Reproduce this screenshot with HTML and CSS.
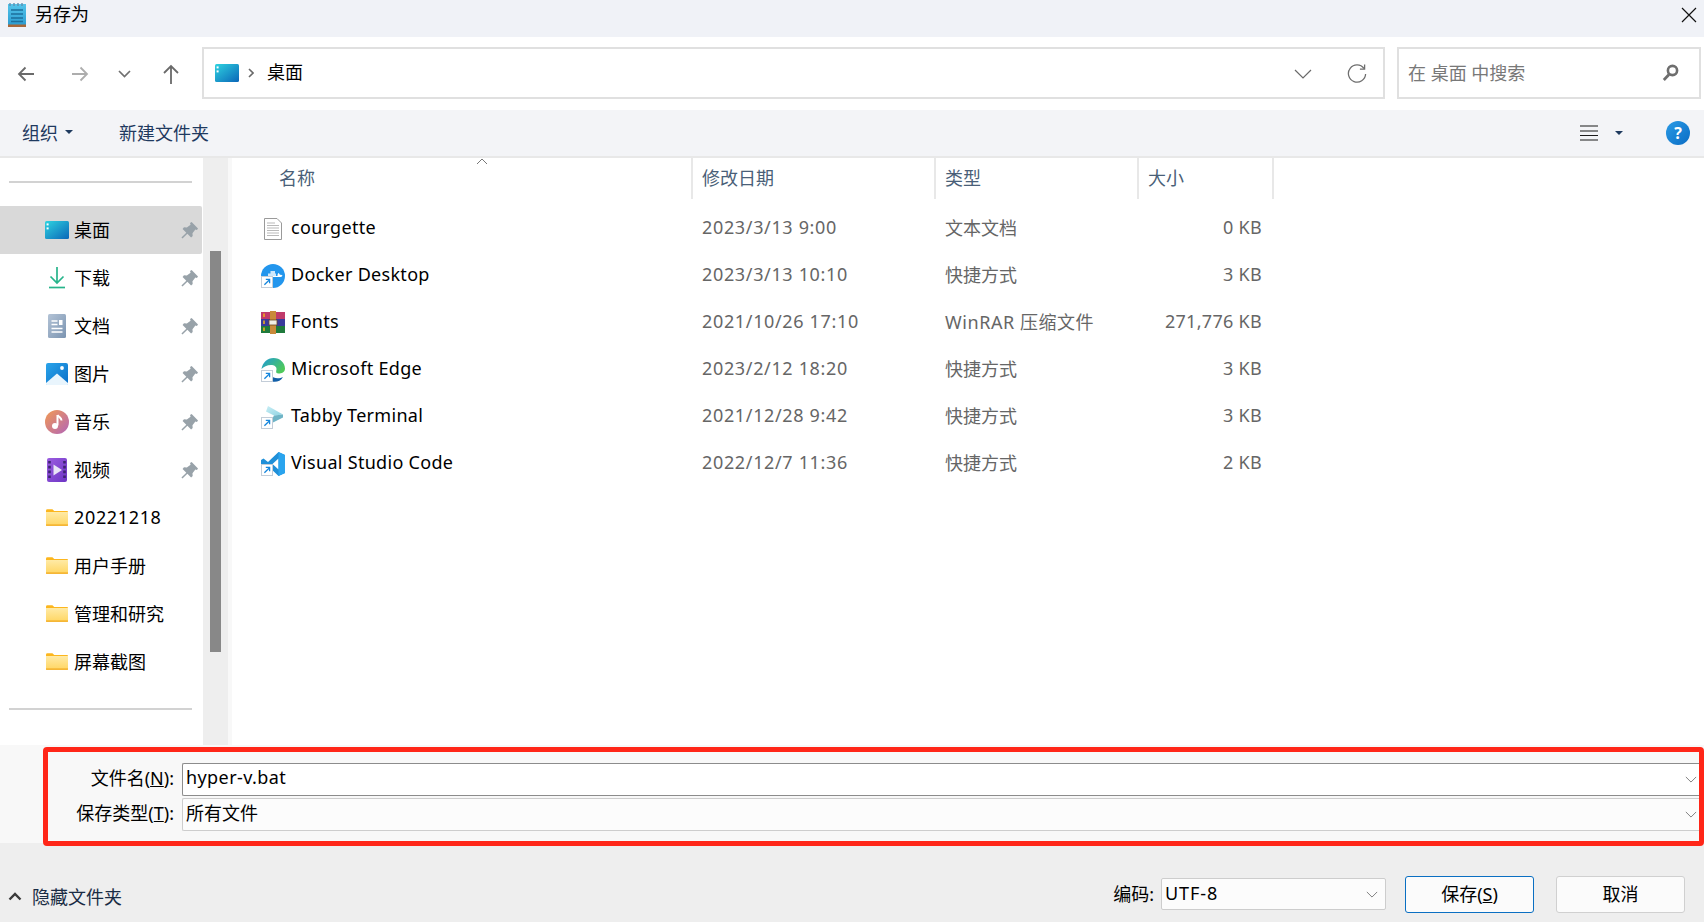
FILE: index.html
```html
<!DOCTYPE html>
<html lang="zh-CN">
<head>
    <meta charset="UTF-8">
    <meta name="viewport" content="width=device-width, initial-scale=1.0">
    <title>另存为</title>
    <link rel="stylesheet" href="styles.css">
</head>
<body>
    <svg class="defs" width="0" height="0">
        <defs>
            <linearGradient id="g-desk" x1="0" y1="0" x2="1" y2="1"><stop offset="0" stop-color="#2fd3e0"/><stop offset="1" stop-color="#0a66b8"/></linearGradient>
            <linearGradient id="g-note" x1="0" y1="0" x2="0" y2="1"><stop offset="0" stop-color="#54c4ea"/><stop offset="1" stop-color="#2a9bd0"/></linearGradient>
            <linearGradient id="g-doc" x1="0" y1="0" x2="1" y2="1"><stop offset="0" stop-color="#b3c3d6"/><stop offset="1" stop-color="#7b94b1"/></linearGradient>
            <linearGradient id="g-pic" x1="0" y1="0" x2="1" y2="1"><stop offset="0" stop-color="#2aa4ea"/><stop offset="1" stop-color="#0b6fc8"/></linearGradient>
            <linearGradient id="g-music" x1="0" y1="0" x2="1" y2="1"><stop offset="0" stop-color="#f29a52"/><stop offset="1" stop-color="#b265b8"/></linearGradient>
            <linearGradient id="g-video" x1="0" y1="0" x2="1" y2="1"><stop offset="0" stop-color="#9b5de0"/><stop offset="1" stop-color="#6d35c4"/></linearGradient>
            <linearGradient id="g-folder" x1="0" y1="0" x2="0" y2="1"><stop offset="0" stop-color="#ffeaa6"/><stop offset="1" stop-color="#ffd766"/></linearGradient>
            <linearGradient id="g-edge" x1="0" y1="0" x2="1" y2="0.6"><stop offset="0" stop-color="#1e9bd8"/><stop offset="1" stop-color="#4fc95a"/></linearGradient>
            <linearGradient id="g-tabby" x1="0" y1="0" x2="1" y2="1"><stop offset="0" stop-color="#c9eef5"/><stop offset="1" stop-color="#8fd3e2"/></linearGradient>
            <symbol id="i-pin" viewBox="0 0 16 16"><path d="M10 0 16 6 15 7.500 13.500 7 10.800 10.500 11 13.200 9.500 14.500 6 11 1.400 15.600 0.400 14.600 5 10 1.500 6.500 2.800 5 5.500 5.200 9 2.500 8.500 1Z" fill="#98a2a9"/></symbol>
            <symbol id="i-folder" viewBox="0 0 24 18"><path d="M0 1.500Q0 0 1.500 0H7L9 2H23Q24 2 24 3V17Q24 18 23 18H1Q0 18 0 17Z" fill="#fcb61e"/><rect x="0" y="3" width="24" height="14" fill="url(#g-folder)"/><rect x="0" y="16.600" width="24" height="1.400" fill="#f2b02c"/></symbol>
            <symbol id="i-link" viewBox="0 0 12 12"><rect x="0.500" y="0.500" width="11" height="11" fill="#fff" stroke="#c3cdd8"/><path d="M3.400 8.800 8 4.200M4.800 3.400H8.600V7.200" fill="none" stroke="#1787dd" stroke-width="1.300"/></symbol>
            <symbol id="i-chev" viewBox="0 0 14 8"><path d="M1 1 7 7 13 1" fill="none" stroke="#7a7a7a" stroke-width="1.100"/></symbol>
        </defs>
    </svg>

    <div class="dialog">
        <div class="titlebar">
            <svg class="title-icon" width="18" height="24" viewBox="0 0 18 24">
                <rect x="0" y="1" width="18" height="22" fill="url(#g-note)"/>
                <rect x="0" y="21.500" width="18" height="2.500" fill="#a8683a"/>
                <path d="M2 0V3M6 0V3M10 0V3M14 0V3" stroke="#5d8fb0" stroke-width="1.400"/>
                <path d="M3 7H15M3 11H15M3 15H15M3 18.500H15" stroke="#1d6f9c" stroke-width="1.500"/>
            </svg>
            <span class="title-text">另存为</span>
            <svg class="close-icon" width="16" height="16" viewBox="0 0 16 16"><path d="M1 1 15 15M15 1 1 15" stroke="#111" stroke-width="1.200"/></svg>
        </div>

        <div class="navbar">
            <button class="nav-btn nav-back"><svg width="18" height="16" viewBox="0 0 18 16"><path d="M17 8H2M8.500 1.500 2 8l6.500 6.500" fill="none" stroke="#6a6a6a" stroke-width="1.800"/></svg></button>
            <button class="nav-btn nav-forward"><svg width="18" height="16" viewBox="0 0 18 16"><path d="M1 8H16M9.500 1.500 16 8l-6.500 6.500" fill="none" stroke="#adadad" stroke-width="1.800"/></svg></button>
            <button class="nav-btn nav-recent"><svg width="13" height="8" viewBox="0 0 13 8"><path d="M1 1 6.500 6.500 12 1" fill="none" stroke="#707070" stroke-width="1.700"/></svg></button>
            <button class="nav-btn nav-up"><svg width="18" height="20" viewBox="0 0 18 20"><path d="M9 20V2M2 9 9 2l7 7" fill="none" stroke="#6a6a6a" stroke-width="1.800"/></svg></button>

            <div class="address">
                <svg class="icon-desktop" width="24" height="18" viewBox="0 0 24 18"><rect width="24" height="18" rx="1.500" fill="url(#g-desk)"/><rect x="1.600" y="2.400" width="2" height="2" fill="#fff"/><rect x="1.600" y="6.400" width="2" height="2" fill="#fff"/></svg>
                <svg class="crumb-sep" width="6" height="10" viewBox="0 0 6 10"><path d="M1 1 5 5 1 9" fill="none" stroke="#6a6a6a" stroke-width="1.600"/></svg>
                <span class="crumb">桌面</span>
                <svg class="addr-chev" width="18" height="10" viewBox="0 0 18 10"><path d="M1 1 9 9 17 1" fill="none" stroke="#6a6a6a" stroke-width="1.200"/></svg>
                <svg class="addr-refresh" width="20" height="20" viewBox="0 0 20 20"><path d="M17 4.500A8.600 8.600 0 1 0 18.600 10" fill="none" stroke="#6e6e6e" stroke-width="1.300"/><path d="M17.600 0.500V5.200H12.900" fill="none" stroke="#6e6e6e" stroke-width="1.300"/></svg>
            </div>

            <div class="search">
                <span class="search-text">在 桌面 中搜索</span>
                <svg class="search-icon" width="17" height="18" viewBox="0 0 17 18"><circle cx="10.500" cy="6.500" r="4.600" fill="none" stroke="#6e6e6e" stroke-width="2.600"/><path d="M7 10.500 1.800 16" stroke="#6e6e6e" stroke-width="2.800"/></svg>
            </div>
        </div>

        <div class="toolbar">
            <span class="tool-btn">组织<i class="caret"></i></span>
            <span class="tool-btn tool-new">新建文件夹</span>
            <svg class="view-icon" width="18" height="16" viewBox="0 0 18 16"><path d="M0 1H18M0 6H18M0 10.500H18M0 15H18" stroke="#1a1a1a" stroke-width="1.200"/></svg>
            <i class="caret caret-view"></i>
            <span class="help">?</span>
        </div>

        <div class="content">
            <aside class="sidebar">
                <hr class="side-rule side-rule-top">
                <div class="side-item selected">
                    <svg class="side-icon" width="24" height="18" viewBox="0 0 24 18"><rect width="24" height="18" rx="1.500" fill="url(#g-desk)"/><rect x="1.600" y="2.400" width="2" height="2" fill="#fff"/><rect x="1.600" y="6.400" width="2" height="2" fill="#fff"/></svg>
                    <span class="side-label">桌面</span>
                    <svg class="pin"><use href="#i-pin"/></svg>
                </div>
                <div class="side-item">
                    <svg class="side-icon" width="24" height="24" viewBox="0 0 24 24"><path d="M12 1V17M5.500 10.500 12 17l6.500-6.500" fill="none" stroke="#27b48b" stroke-width="1.700"/><path d="M4 21.500H20" stroke="#27b48b" stroke-width="1.700"/></svg>
                    <span class="side-label">下载</span>
                    <svg class="pin"><use href="#i-pin"/></svg>
                </div>
                <div class="side-item">
                    <svg class="side-icon" width="24" height="24" viewBox="0 0 24 24"><rect x="3" y="0" width="18" height="24" rx="1.500" fill="url(#g-doc)"/><path d="M6.500 7H12.500M6.500 10.500H12.500M6.500 14.500H17.500M6.500 18H17.500" stroke="#fff" stroke-width="1.300"/><rect x="14" y="6" width="3.500" height="5" fill="#fff"/></svg>
                    <span class="side-label">文档</span>
                    <svg class="pin"><use href="#i-pin"/></svg>
                </div>
                <div class="side-item">
                    <svg class="side-icon" width="24" height="24" viewBox="0 0 24 24"><rect x="1" y="1" width="22" height="22" rx="2" fill="url(#g-pic)"/><path d="M1 21 12 11.500 23 21V22Q23 23 22 23H2Q1 23 1 22Z" fill="#e9f5fd"/><circle cx="17" cy="6" r="1.900" fill="#fff"/></svg>
                    <span class="side-label">图片</span>
                    <svg class="pin"><use href="#i-pin"/></svg>
                </div>
                <div class="side-item">
                    <svg class="side-icon" width="24" height="24" viewBox="0 0 24 24"><circle cx="12" cy="12" r="12" fill="url(#g-music)"/><path d="M12.500 5V15.500" stroke="#fff" stroke-width="2"/><path d="M12.500 5C14 7.500 16.500 7.500 16.500 10.500" fill="none" stroke="#fff" stroke-width="2"/><circle cx="10" cy="16" r="3" fill="#fff"/></svg>
                    <span class="side-label">音乐</span>
                    <svg class="pin"><use href="#i-pin"/></svg>
                </div>
                <div class="side-item">
                    <svg class="side-icon" width="24" height="24" viewBox="0 0 24 24"><rect x="2" y="0" width="20" height="24" rx="2" fill="url(#g-video)"/><path d="M4.500 3V21M19.500 3V21" stroke="#3d2470" stroke-width="2.600" stroke-dasharray="2.600 2.200"/><path d="M8.500 6.500 17 12 8.500 17.500Z" fill="#e8e4f6"/></svg>
                    <span class="side-label">视频</span>
                    <svg class="pin"><use href="#i-pin"/></svg>
                </div>
                <div class="side-item">
                    <svg class="side-icon" width="24" height="18"><use href="#i-folder" x="1" width="22" height="17"/></svg>
                    <span class="side-label side-num">20221218</span>
                </div>
                <div class="side-item">
                    <svg class="side-icon" width="24" height="18"><use href="#i-folder" x="1" width="22" height="17"/></svg>
                    <span class="side-label">用户手册</span>
                </div>
                <div class="side-item">
                    <svg class="side-icon" width="24" height="18"><use href="#i-folder" x="1" width="22" height="17"/></svg>
                    <span class="side-label">管理和研究</span>
                </div>
                <div class="side-item">
                    <svg class="side-icon" width="24" height="18"><use href="#i-folder" x="1" width="22" height="17"/></svg>
                    <span class="side-label">屏幕截图</span>
                </div>
                <hr class="side-rule side-rule-bottom">
            </aside>

            <div class="scrollbar"><div class="scroll-thumb"></div></div>

            <main class="files">
                <div class="file-row file-head">
                    <span class="cell cell-name-head">名称<svg class="sort-arrow" width="12" height="7" viewBox="0 0 12 7"><path d="M1 6 6 1l5 5" fill="none" stroke="#777" stroke-width="1"/></svg></span>
                    <span class="cell">修改日期</span>
                    <span class="cell">类型</span>
                    <span class="cell">大小</span>
                </div>

                <div class="file-list">
                    <div class="file-row">
                        <span class="cell cell-name">
                            <svg class="file-icon" width="24" height="24" viewBox="0 0 24 24"><path d="M3.500 1.500H16L20.500 6V22.500H3.500Z" fill="#fff" stroke="#9a9a9a"/><path d="M6 6H14M6 8.500H18M6 11H18M6 13.500H18M6 16H18M6 18.500H18" stroke="#b9b9b9"/></svg>
                            <span class="file-name">courgette</span>
                        </span>
                        <span class="cell cell-meta cell-date">2023/3/13 9:00</span>
                        <span class="cell cell-meta">文本文档</span>
                        <span class="cell cell-meta cell-size">0 KB</span>
                    </div>
                    <div class="file-row">
                        <span class="cell cell-name">
                            <svg class="file-icon" width="24" height="24" viewBox="0 0 24 24"><circle cx="12" cy="12" r="12" fill="#2396ed"/><path d="M3 13H19C20 13 21 12.500 21.500 11.500 20.500 10.500 19.500 10.800 19 11 18.500 9.500 17.500 9 17.500 9 16.500 10 16.500 11 16.500 12H3.500Z" fill="#fff"/><path d="M7 9.500H15V12H7ZM9.500 7H14V9.500H9.500Z" fill="#cfe8fb"/><use href="#i-link" x="0" y="12" width="12" height="12"/></svg>
                            <span class="file-name">Docker Desktop</span>
                        </span>
                        <span class="cell cell-meta cell-date">2023/3/13 10:10</span>
                        <span class="cell cell-meta">快捷方式</span>
                        <span class="cell cell-meta cell-size">3 KB</span>
                    </div>
                    <div class="file-row">
                        <span class="cell cell-name">
                            <svg class="file-icon" width="24" height="24" viewBox="0 0 24 24"><rect x="0" y="1" width="24" height="7" fill="#c03a6a"/><rect x="0" y="8" width="24" height="7" fill="#3a3a9c"/><rect x="0" y="15" width="24" height="7" fill="#1f7a3c"/><path d="M3 2.500V6M3 9.500V13M3 16.500V20" stroke="#f5b21a" stroke-width="1.500"/><rect x="9" y="0" width="6" height="23" fill="#c98a3a"/><rect x="8" y="9" width="8" height="5" fill="#f1efe6" stroke="#6b4a24" stroke-width="0.800"/></svg>
                            <span class="file-name">Fonts</span>
                        </span>
                        <span class="cell cell-meta cell-date">2021/10/26 17:10</span>
                        <span class="cell cell-meta cell-type-long">WinRAR 压缩文件</span>
                        <span class="cell cell-meta cell-size">271,776 KB</span>
                    </div>
                    <div class="file-row">
                        <span class="cell cell-name">
                            <svg class="file-icon" width="24" height="24" viewBox="0 0 24 24"><path d="M0.500 11C1.500 4.500 6.500 0 12.500 0 19 0 24 5 24 10.500 24 14.500 20.500 15.500 17.500 15.500 14 15.500 15.500 12.500 15.500 11 15.500 8.500 13 7 10 7 6 7 2.500 9 0.500 11Z" fill="url(#g-edge)"/><path d="M8 22C12 25 19 24.500 22 19 18.500 21 12 21 10 17 8.500 18.500 8 20 8 22Z" fill="#125fa8"/><use href="#i-link" x="0" y="12" width="12" height="12"/></svg>
                            <span class="file-name">Microsoft Edge</span>
                        </span>
                        <span class="cell cell-meta cell-date">2023/2/12 18:20</span>
                        <span class="cell cell-meta">快捷方式</span>
                        <span class="cell cell-meta cell-size">3 KB</span>
                    </div>
                    <div class="file-row">
                        <span class="cell cell-name">
                            <svg class="file-icon" width="24" height="24" viewBox="0 0 24 24"><path d="M7 1 22 9.500 13 10.500 5 6.500Z" fill="url(#g-tabby)"/><path d="M22 9.500V12.500L8 19.500 13 10.500Z" fill="#6fb4c6"/><use href="#i-link" x="0" y="12" width="12" height="12"/></svg>
                            <span class="file-name">Tabby Terminal</span>
                        </span>
                        <span class="cell cell-meta cell-date">2021/12/28 9:42</span>
                        <span class="cell cell-meta">快捷方式</span>
                        <span class="cell cell-meta cell-size">3 KB</span>
                    </div>
                    <div class="file-row">
                        <span class="cell cell-name">
                            <svg class="file-icon" width="24" height="24" viewBox="0 0 24 24"><path d="M17.500 0 24 3V21L17.500 24 7 14 2.500 17.500 0 16V8L2.500 6.500 7 10ZM17.500 6.500 11.500 12 17.500 17.500Z" fill="#1f8fd8"/><path d="M17.500 0 24 3V21L17.500 24Z" fill="#2aa4ee"/><use href="#i-link" x="0" y="12" width="12" height="12"/></svg>
                            <span class="file-name">Visual Studio Code</span>
                        </span>
                        <span class="cell cell-meta cell-date">2022/12/7 11:36</span>
                        <span class="cell cell-meta">快捷方式</span>
                        <span class="cell cell-meta cell-size">2 KB</span>
                    </div>
                </div>
            </main>
        </div>

        <div class="save-form">
            <div class="form-row">
                <label class="form-label">文件名(<u>N</u>):</label>
                <div class="field field-active">
                    <span class="field-text field-latin">hyper-v.bat</span>
                    <svg class="field-chev"><use href="#i-chev"/></svg>
                </div>
            </div>
            <div class="form-row">
                <label class="form-label">保存类型(<u>T</u>):</label>
                <div class="field">
                    <span class="field-text">所有文件</span>
                    <svg class="field-chev"><use href="#i-chev"/></svg>
                </div>
            </div>
            <div class="callout"></div>
        </div>

        <div class="footer">
            <span class="hide-folders">
                <svg width="14" height="9" viewBox="0 0 14 9"><path d="M1.500 7.500 7 2l5.500 5.500" fill="none" stroke="#3a3a3a" stroke-width="2.400"/></svg>
                隐藏文件夹
            </span>
            <span class="enc-label">编码:</span>
            <div class="enc-select">
                <span class="enc-text">UTF-8</span>
                <svg class="field-chev"><use href="#i-chev"/></svg>
            </div>
            <button class="btn btn-primary">保存(<u>S</u>)</button>
            <button class="btn btn-cancel">取消</button>
        </div>
    </div>
</body>
</html>
```

FILE: styles.css
```css
* { box-sizing: border-box; }
html, body { margin: 0; padding: 0; }
body { width: 1704px; height: 922px; overflow: hidden; background: #fff; color: #000; font-family: "Noto Sans", "Noto Sans CJK SC", sans-serif; font-size: 18px; }
button { font: inherit; color: inherit; background: none; border: 0; padding: 0; }
.defs { position: absolute; }
.dialog { display: flex; flex-direction: column; height: 922px; }

/* title */
.titlebar { display: flex; align-items: center; height: 37px; padding-left: 8px; background: #f0f2f7; }
.title-icon { margin-top: -7px; }
.title-text { margin-left: 9px; margin-top: -11px; font-size: 18px; }
.close-icon { margin-left: auto; margin-right: 7px; margin-top: -7px; }

/* nav */
.navbar { display: flex; align-items: center; height: 73px; padding: 0 0 0 14px; background: #fff; }
.nav-btn { display: flex; align-items: center; justify-content: center; width: 24px; height: 24px; }
.nav-forward { margin-left: 30px; }
.nav-recent { margin-left: 20px; }
.nav-up { margin-left: 23px; }
.address { display: flex; align-items: center; width: 1183px; height: 52px; margin-left: 19px; padding-left: 11px; border: 2px solid #e0e0e0; margin-top: -1px; }
.crumb-sep { margin-left: 9px; }
.crumb { margin-left: 13px; margin-bottom: 4px; }
.addr-chev { margin-left: auto; margin-top: 2px; }
.addr-refresh { margin-left: 35px; margin-right: 16px; margin-top: 2px; }
.search { display: flex; align-items: center; width: 304px; height: 52px; margin-left: 12px; padding: 0 20px 0 9px; border: 2px solid #e0e0e0; margin-top: -1px; }
.search-text { color: #787878; margin-bottom: 2px; }
.search-icon { margin-left: auto; }

/* toolbar */
.toolbar { display: flex; align-items: center; height: 48px; padding: 0 14px 0 22px; background: #f3f4f7; border-bottom: 2px solid #e8e8e8; color: #1f3a5f; }
.tool-btn { display: inline-flex; align-items: center; margin-bottom: 2px; }
.tool-new { margin-left: 46px; }
.caret { display: inline-block; width: 0; height: 0; border-left: 4px solid transparent; border-right: 4px solid transparent; border-top: 4px solid #1f3a5f; margin-left: 7px; }
.view-icon { margin-left: auto; }
.caret-view { margin-left: 17px; margin-right: -1px; }
.help { display: flex; align-items: center; justify-content: center; width: 24px; height: 24px; margin-left: 44px; border-radius: 50%; background: linear-gradient(135deg, #2a9be6, #0a6cc4); color: #fff; font-size: 16px; font-weight: 700; }

/* left pane */
.content { display: flex; height: 587px; background: #fff; }
.sidebar { width: 203px; padding-top: 23px; }
.side-rule { height: 2px; margin: 0 11px 0 9px; border: 0; background: #d2d2d2; }
.side-rule-top { margin-bottom: 23px; }
.side-rule-bottom { margin-top: 22px; }
.side-item { display: flex; align-items: center; width: 202px; height: 48px; padding-left: 45px; border-radius: 0 2px 2px 0; }
.side-item.selected { background: #d9d9d9; }
.side-icon { flex: none; width: 24px; }
.side-label { margin-left: 5px; margin-bottom: 2px; }
.side-num { letter-spacing: 0.65px; }
.pin { width: 17px; height: 17px; margin-left: auto; margin-right: 4px; }
.scrollbar { width: 25px; padding: 93px 7px 0; background: #eee; }
.scroll-thumb { width: 11px; height: 401px; background: #888; }

/* files */
.files { flex: 1; border-left: 4px solid #f8f8f8; overflow: hidden; }
.file-row { display: grid; grid-template-columns: 461px 243px 203px 135px; align-items: center; height: 47px; }
.file-head { height: 41px; color: #4a5f78; }
.file-head .cell { display: flex; align-items: center; height: 41px; padding-left: 9px; padding-bottom: 4px; border-right: 2px solid #e8e8e8; position: relative; }
.file-head .cell:first-child { padding-left: 47px; }
.sort-arrow { position: absolute; left: 244px; top: 0; }
.file-list { padding-top: 6px; }
.cell-name { display: flex; align-items: center; padding-left: 29px; }
.file-icon { flex: none; }
.file-name { margin-left: 6px; margin-bottom: 3px; letter-spacing: 0.3px; }
.cell-meta { padding-left: 9px; padding-bottom: 3px; color: #666; }
.cell-date { letter-spacing: 0.65px; }
.cell-type-long { letter-spacing: 0.55px; }
.cell-size { padding-right: 12px; text-align: right; letter-spacing: 0.3px; }

/* form */
.save-form { position: relative; height: 98px; padding-top: 18px; background: #f8f8f8; }
.form-row { display: flex; align-items: center; height: 33px; margin-bottom: 2px; }
.form-label { width: 174px; padding-bottom: 5px; text-align: right; }
.field { display: flex; align-items: center; justify-content: space-between; flex: 1; height: 33px; margin-left: 8px; padding-left: 3px; background: #fcfcfc; border: 1px solid #cdcdcd; border-right: 0; border-radius: 2px 0 0 2px; }
.field-active { background: #fff; border-color: #8c8c8c; }
.field-text { padding-bottom: 5px; }
.field-latin { letter-spacing: 0.4px; }
.field-chev { width: 12px; height: 7px; margin-right: 7px; flex: none; }
.callout { position: absolute; left: 43px; top: 2px; width: 1661px; height: 99px; border: 5px solid #ff2618; border-radius: 4px; }

/* footer */
.footer { display: flex; align-items: flex-start; flex: 1; padding: 0 19px 0 8px; background: #eee; }
.hide-folders { display: flex; align-items: center; gap: 10px; margin-top: 40px; color: #1a2c44; }
.enc-label { margin-left: auto; margin-right: 7px; margin-top: 37px; }
.enc-select { display: flex; align-items: center; justify-content: space-between; width: 225px; height: 32px; margin-top: 35px; padding-left: 3px; background: #fcfcfc; border: 1px solid #cdcdcd; border-radius: 2px; }
.enc-text { padding-bottom: 2px; letter-spacing: 0.9px; }
.btn { width: 129px; height: 37px; margin-top: 33px; padding-bottom: 4px; background: #fbfbfb; border: 1px solid #d0d0d0; border-radius: 3px; }
.btn-primary { margin-left: 19px; border: 1.500px solid #0a6fc2; }
.btn-cancel { margin-left: 22px; }
```
